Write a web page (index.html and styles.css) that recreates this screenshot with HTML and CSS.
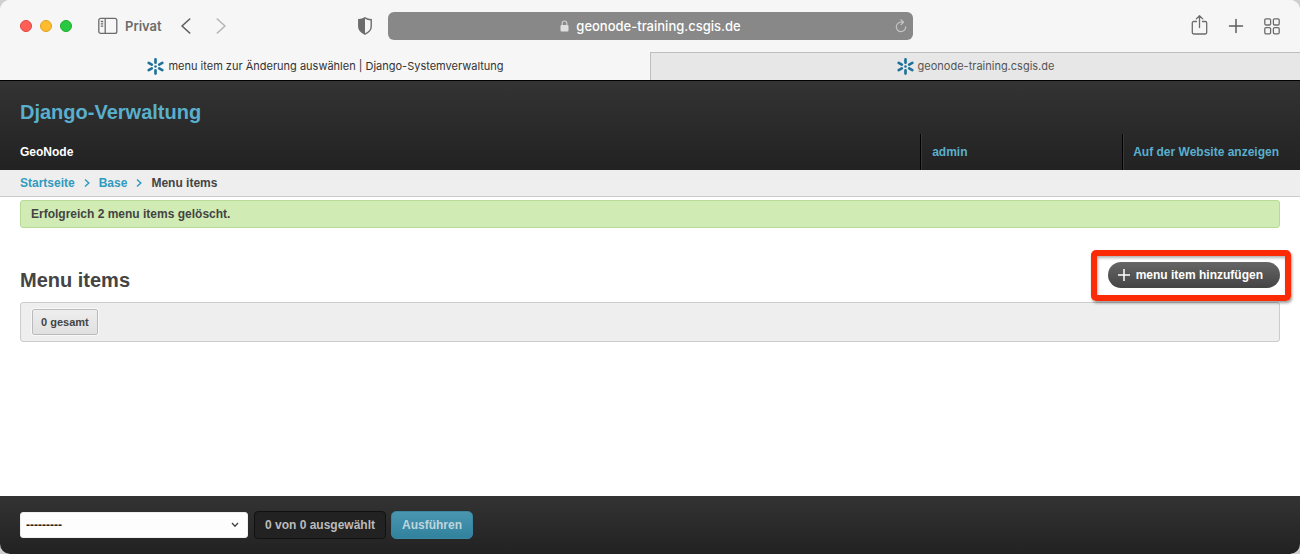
FILE: index.html
```html
<!DOCTYPE html>
<html lang="de">
<head>
<meta charset="utf-8">
<meta name="viewport" content="width=device-width, initial-scale=1">
<title>menu item zur Änderung auswählen | Django-Systemverwaltung</title>
<link rel="stylesheet" href="styles.css">
</head>
<body>
<svg class="defs" aria-hidden="true">
  <symbol id="star" viewBox="0 0 16 16">
    <g fill="none" stroke="#1f7199" stroke-width="2.5" stroke-linecap="round">
      <path d="M8 1.300V4.400M8 11.600V14.700M1.600 4.600L4.500 6.200M11.500 9.800L14.400 11.400M1.600 11.400L4.500 9.800M11.500 6.200L14.400 4.600"/>
    </g>
    <circle cx="8" cy="8" r="1.200" fill="#1f7199"/>
  </symbol>
</svg>
<div class="window">
  <div class="toolbar">
    <div class="tools-left">
      <div class="lights"><span class="light red"></span><span class="light yellow"></span><span class="light green"></span></div>
      <button class="tool private" type="button">
        <svg width="20" height="18" viewBox="0 0 20 18" fill="none" stroke="#6c6c6c" stroke-width="1.3"><rect x="0.8" y="1.4" width="18" height="15" rx="2"/><path d="M7.2 1.4V16.4M2.8 4.5H5.2M2.8 6.8H5.2M2.8 9.1H5.2"/></svg>
        <span>Privat</span>
      </button>
      <button class="tool back" type="button" aria-label="Zurück"><svg width="10" height="16" viewBox="0 0 10 16" fill="none" stroke="#5d5d5d" stroke-width="1.6" stroke-linecap="round" stroke-linejoin="round"><path d="M8.700 1L1 8L8.700 15"/></svg></button>
      <button class="tool forward" type="button" aria-label="Vorwärts"><svg width="10" height="16" viewBox="0 0 10 16" fill="none" stroke="#b5b5b5" stroke-width="1.6" stroke-linecap="round" stroke-linejoin="round"><path d="M1.300 1L9 8L1.300 15"/></svg></button>
      <button class="tool shield" type="button" aria-label="Datenschutzbericht"><svg width="16" height="18" viewBox="0 0 16 18"><path d="M8 .8C9.800 2 12 2.600 14.200 2.700V9.500C14.200 13 11.500 15.500 8 17.200C4.500 15.500 1.800 13 1.800 9.500V2.700C4 2.600 6.200 2 8 .8Z" fill="none" stroke="#6c6c6c" stroke-width="1.4"/><path d="M8 .8V17.200C4.500 15.500 1.800 13 1.800 9.500V2.700C4 2.600 6.200 2 8 .8Z" fill="#6c6c6c"/></svg></button>
    </div>
    <div class="address">
      <span class="url">
        <svg width="9" height="12" viewBox="0 0 9 12"><rect x=".5" y="5" width="8" height="6.500" rx="1" fill="#dedede"/><path d="M2.200 5V3.300a2.300 2.300 0 0 1 4.600 0V5" fill="none" stroke="#cfcfcf" stroke-width="1.200"/></svg>
        geonode-training.csgis.de
      </span>
      <button class="tool reload" type="button" aria-label="Neu laden"><svg width="12" height="14" viewBox="0 0 12 14" fill="none" stroke="#c4c4c4" stroke-width="1.200" stroke-linecap="round" stroke-linejoin="round"><path d="M10.700 7.800A4.700 4.700 0 1 1 6 3.200H8.200M6 .8L8.600 3.200L6 5.600"/></svg></button>
    </div>
    <div class="tools-right">
      <button class="tool" type="button" aria-label="Teilen"><svg width="17" height="22" viewBox="0 0 17 22" fill="none" stroke="#6c6c6c" stroke-width="1.300" stroke-linecap="round" stroke-linejoin="round"><path d="M5.500 6.500H2.700Q1.300 6.500 1.300 7.900V17.600Q1.300 19 2.700 19H14.300Q15.700 19 15.700 17.600V7.900Q15.700 6.500 14.300 6.500H11.500M8.500 12.500V1M5.300 3.900L8.500 .8L11.700 3.900"/></svg></button>
      <button class="tool" type="button" aria-label="Neuer Tab"><svg width="16" height="16" viewBox="0 0 16 16" fill="none" stroke="#5d5d5d" stroke-width="1.500" stroke-linecap="round"><path d="M8 1.500V14.500M1.500 8H14.500"/></svg></button>
      <button class="tool" type="button" aria-label="Tabübersicht"><svg width="16" height="17" viewBox="0 0 16 17" fill="none" stroke="#6c6c6c" stroke-width="1.300"><rect x=".8" y=".8" width="5.800" height="6.200" rx="1.200"/><rect x="9.400" y=".8" width="5.800" height="6.200" rx="1.200"/><rect x=".8" y="9.600" width="5.800" height="6.200" rx="1.200"/><rect x="9.400" y="9.600" width="5.800" height="6.200" rx="1.200"/></svg></button>
    </div>
  </div>
  <div class="tabs">
    <button class="tab active" type="button"><svg width="17" height="17"><use href="#star"/></svg>menu item zur Änderung auswählen | Django-Systemverwaltung</button>
    <button class="tab" type="button"><svg width="17" height="17"><use href="#star"/></svg>geonode-training.csgis.de</button>
  </div>

  <header class="header">
    <a class="brand" href="#">Django-Verwaltung</a>
    <div class="header-row">
      <span class="site">GeoNode</span>
      <nav class="user-nav">
        <a class="user" href="#">admin</a>
        <a class="view-site" href="#">Auf der Website anzeigen</a>
      </nav>
    </div>
  </header>
  <nav class="breadcrumbs">
    <a href="#">Startseite</a>
    <svg width="6" height="10" viewBox="0 0 6 10"><path d="M1 1.500L4.800 5L1 8.500"/></svg>
    <a href="#">Base</a>
    <svg width="6" height="10" viewBox="0 0 6 10"><path d="M1 1.500L4.800 5L1 8.500"/></svg>
    <span>Menu items</span>
  </nav>

  <main class="content">
    <p class="message">Erfolgreich 2 menu items gelöscht.</p>
    <div class="title-row">
      <h1>Menu items</h1>
      <div class="highlight">
        <a class="add" href="#"><svg width="12" height="12" viewBox="0 0 12 12"><path d="M6 0V12M0 6H12" stroke="#fff" stroke-width="1.500"/></svg>menu item hinzufügen</a>
      </div>
    </div>
    <div class="pagination"><span class="total">0 gesamt</span></div>
  </main>

  <footer class="footer">
    <div class="select-wrap">
      <select aria-label="Aktion"><option>---------</option></select>
      <svg width="8" height="6" viewBox="0 0 8 6"><path d="M1 1L4 4.300L7 1" fill="none" stroke="#444" stroke-width="1.300"/></svg>
    </div>
    <span class="counter">0 von 0 ausgewählt</span>
    <button class="run" type="button">Ausführen</button>
  </footer>
</div>
</body>
</html>
```
FILE: styles.css
```css
* { box-sizing: border-box; }
body {
  margin: 0;
  background: #cfcfcf;
  color: #444;
  font: bold 12px/16px "Liberation Sans", Arial, sans-serif;
}
a { color: #309bbf; text-decoration: none; }
button { border: 0; cursor: pointer; }
svg { display: block; flex: none; }
.defs { position: absolute; width: 0; height: 0; }

.window {
  display: flex;
  flex-direction: column;
  min-height: 100vh;
  background: #fff;
  border-radius: 10px;
  overflow: hidden;
}

/* Browser toolbar */
.toolbar {
  display: grid;
  grid-template-columns: 1fr minmax(200px, 525px) 1fr;
  align-items: center;
  height: 52px;
  background: #f6f6f6;
}
.tools-left, .tools-right { display: flex; align-items: center; }
.tools-left { padding: 0 15px 0 20px; }
.tools-right { justify-content: flex-end; gap: 20px; padding-right: 20px; }
.tool { display: flex; align-items: center; padding: 0; background: none; }
.lights { display: flex; gap: 8px; }
.light { width: 12px; height: 12px; border: 1px solid; border-radius: 50%; }
.red { background: #ff5f57; border-color: #e14640; }
.yellow { background: #febc2e; border-color: #dfa023; }
.green { background: #28c840; border-color: #1dad2b; }
.private {
  gap: 7px;
  margin-left: 26px;
  color: #6c6c6c;
  font: 600 13px/16px Inter, sans-serif;
}
.back { margin-left: 19px; }
.forward { margin-left: 25px; }
.shield { margin-left: auto; }
.address {
  display: flex;
  align-items: center;
  height: 28px;
  padding: 0 6px 0 19px;
  border-radius: 6px;
  background: #888;
  color: #fff;
  font: 500 13px/16px Inter, sans-serif;
}
.url { display: flex; flex: 1; align-items: center; justify-content: center; gap: 7px; }

.tabs { display: grid; grid-template-columns: 1fr 1fr; height: 28px; }
.tab {
  display: flex;
  align-items: center;
  justify-content: center;
  gap: 4px;
  padding: 0 6px 1px;
  border-top: 1px solid #bebebe;
  border-left: 1px solid #bebebe;
  background: #e7e7e7;
  color: #555;
  font: 400 11px/16px Inter, sans-serif;
}
.tab.active { border-color: #f6f6f6; background: #f6f6f6; color: #333; }

/* Admin header */
.header {
  border-top: 1px solid #000;
  background: linear-gradient(#333, #222);
}
.brand {
  display: block;
  padding: 19px 20px 10px;
  color: #59afcc;
  font-size: 20px;
  line-height: 24px;
}
.header-row { display: flex; justify-content: space-between; }
.site { padding: 10px 20px; color: #fff; }
.user-nav { display: flex; }
.user-nav a { padding: 10px; color: #59afcc; border-left: 1px solid #000; box-shadow: inset 1px 0 #383838; }
.user-nav .user { width: 202px; padding-left: 11px; }
.user-nav .view-site { padding-right: 21px; }

.breadcrumbs {
  display: flex;
  align-items: center;
  gap: 9px;
  padding: 5px 20px;
  border-bottom: 1px solid #ccc;
  background: #eee;
}
.breadcrumbs path { fill: none; stroke: #309bbf; stroke-width: 1.5; }

/* Change list */
.content { flex: 1; padding: 3px 20px 20px; }
.message {
  margin: 0;
  padding: 5px 10px;
  border: 1px solid #b8dc98;
  border-radius: 3px;
  background: #d0ecb4;
}
.title-row {
  display: flex;
  align-items: center;
  justify-content: space-between;
  margin-top: 22px;
}
h1 { margin: 9px 0 0; font-size: 20px; line-height: 24px; }
.highlight {
  position: relative;
  margin-right: -11px;
  padding: 6px 5px 7px 11px;
  border: 6px solid #fb2b06;
  border-radius: 5px;
  box-shadow: 1px 2px 3px rgba(0, 0, 0, .4), inset 1px 2px 3px rgba(0, 0, 0, .3);
}
.add {
  display: flex;
  align-items: center;
  gap: 6px;
  padding: 5px 17px 5px 10px;
  border-radius: 13px;
  background: linear-gradient(#666, #444);
  color: #fff;
}
.pagination {
  display: flex;
  margin-top: 1px;
  padding: 6px 11px;
  border: 1px solid #ccc;
  border-radius: 3px;
  background: #eee;
}
.total {
  padding: 4px 8px;
  border: 1px solid #bbb;
  outline: 1px solid #f8f8f8;
  border-radius: 2px;
  background: linear-gradient(#eee, #e0e0e0);
  font-size: 11px;
}

/* Action bar */
.footer {
  display: flex;
  align-items: center;
  gap: 6px;
  padding: 15px 20px;
  background: linear-gradient(#333, #222);
}
.select-wrap { position: relative; width: 228px; }
.select-wrap svg { position: absolute; right: 9px; top: 10px; pointer-events: none; }
select {
  display: block;
  width: 100%;
  height: 26px;
  padding: 0 24px 0 5px;
  border: 1px solid #eee;
  border-radius: 3px;
  appearance: none;
  background: #fdfdfd;
  color: #222;
  font: bold 12px/16px "Liberation Sans", Arial, sans-serif;
}
.counter {
  padding: 5px 10px;
  border: 1px solid #111;
  border-radius: 4px;
  background: #222;
  color: #bbb;
}
.run {
  margin-left: -1px;
  padding: 5px 10px;
  border: 1px solid #3a86a0;
  border-radius: 5px;
  background: linear-gradient(#4a96b0, #31829e);
  color: #bfd5dd;
  font: inherit;
}
```
